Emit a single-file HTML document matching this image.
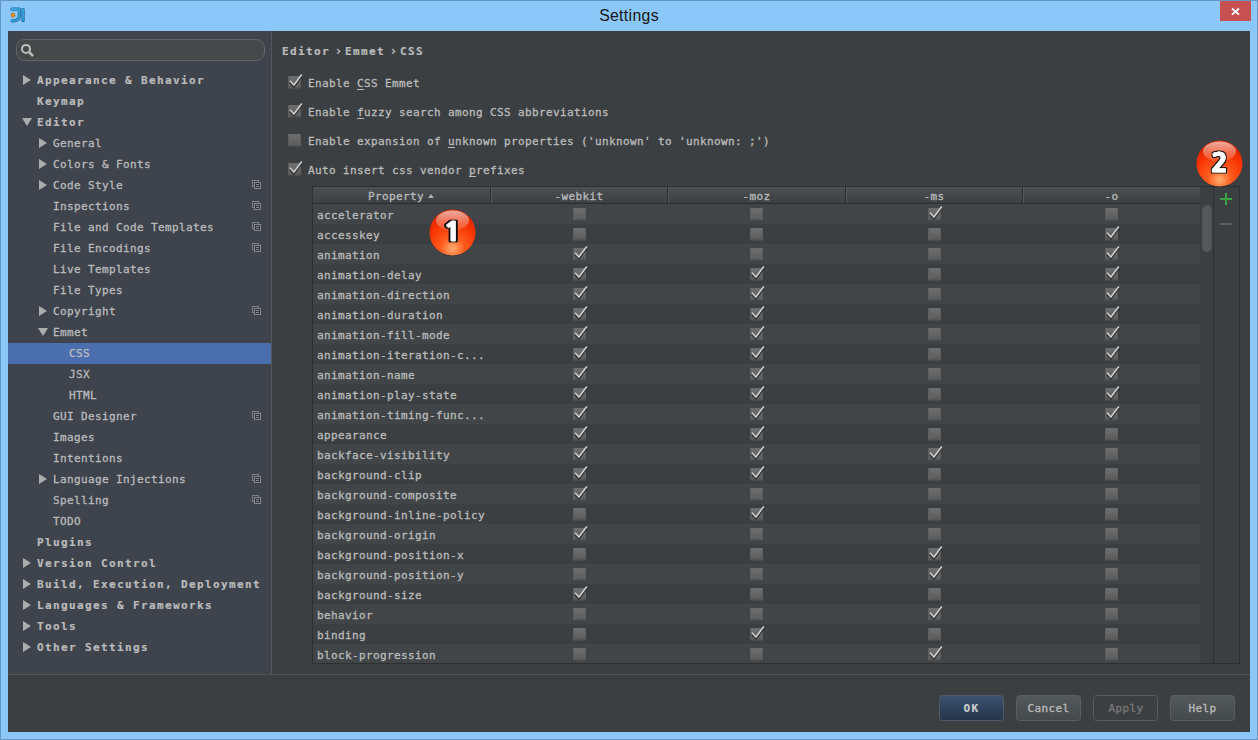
<!DOCTYPE html>
<html lang="en"><head><meta charset="utf-8"><title>Settings</title>
<style>
html,body{margin:0;padding:0}
body{width:1258px;height:740px;position:relative;overflow:hidden;background:#8bc8f9;
 font-family:"DejaVu Sans Mono","Liberation Mono",monospace;font-size:11px;letter-spacing:0.378px;color:#bbbbbb;-webkit-text-stroke:0.3px currentColor;}
body *{box-sizing:border-box}
i{font-style:normal;display:block}
.frame{position:absolute;left:0;top:0;width:1258px;height:740px;border:1px solid #6597c0;}
.title{-webkit-text-stroke:0;position:absolute;left:0;top:6px;width:1258px;text-align:center;font-family:"Liberation Sans",sans-serif;font-size:15.8px;letter-spacing:.33px;color:#1a1512;line-height:20px}
.close{position:absolute;left:1220px;top:1px;width:31px;height:20px;background:#c75050}
.close svg{position:absolute;left:10px;top:5px}
.logo{position:absolute;left:10px;top:7px}
.content{position:absolute;left:8px;top:31px;width:1242px;height:701px;background:#3c3f41}
.side{position:absolute;left:8px;top:31px;width:264px;height:643px;background:#3e434c;border-right:1px solid #555759}
.search{position:absolute;left:8px;top:8px;width:249px;height:22px;border:1px solid #636567;border-radius:9px;background:#45494a}
.search svg{position:absolute;left:4px;top:3px}
.tree{position:absolute;left:0;top:39px;width:263px}
.tr{position:relative;height:21px;line-height:21px;white-space:nowrap}
.tr span{position:absolute;top:0}
.tr.b{font-weight:bold;letter-spacing:1.378px;-webkit-text-stroke:0.2px currentColor}
.tr.sel{background:#4b6eaf}
.ar{position:absolute;top:5px;width:0;height:0;border-left:8.5px solid #adadad;border-top:5px solid transparent;border-bottom:5px solid transparent}
.ad{position:absolute;top:6px;width:0;height:0;border-top:8.5px solid #adadad;border-left:5px solid transparent;border-right:5px solid transparent;margin-left:-0.5px}
.cp{position:absolute;left:244px;top:5px;width:7px;height:7px;border:1px solid #7b7f86}
.cp b{position:absolute;left:1px;top:1px;width:7px;height:7px;border:1px solid #84878d;background:#35383d;display:block}
.cp b:before{content:"";box-sizing:border-box;position:absolute;left:1px;top:1px;width:3px;height:1px;background:#84878d;box-shadow:0 2px 0 #84878d}
.hsep{position:absolute;left:8px;top:674px;width:1242px;height:1px;background:#515355}
.crumb{position:absolute;top:42px;height:20px;line-height:20px;font-weight:bold;letter-spacing:1.378px;-webkit-text-stroke:0.2px currentColor;white-space:nowrap}
.opt{position:absolute;left:308px;height:20px;line-height:20px;white-space:nowrap}
.opt u{text-decoration:underline;text-underline-offset:2px}
.cb{position:absolute;width:13px;height:13px;border-bottom:1px solid #484b4d;}
.cb:before{content:"";box-sizing:border-box;position:absolute;left:0;top:0;width:13px;height:12px;background:linear-gradient(#6e6e6e,#5c5c5c);border:1px solid #5e5e5e;border-top-color:#6a6a6a;border-bottom-color:#565656}
.cb svg{position:absolute;left:-1px;top:-4px}
.tbl{position:absolute;left:312px;top:186px;width:928px;height:478px;border:1px solid #2d2f30;overflow:hidden}
.th{position:absolute;left:0;top:0;width:887px;height:17px;background:linear-gradient(#4c5053,#3c4043);border-bottom:1px solid #2b2d2e}
.hc{position:absolute;top:0;height:16px;line-height:16px;text-align:center}
.hc span{position:relative;top:2px}
.hc.sep{border-left:1px solid #2b2d2e;box-shadow:inset 1px 0 0 #56595b}
.sort{position:absolute;left:115px;top:7px;width:0;height:0;border-bottom:4px solid #adadad;border-left:3.5px solid transparent;border-right:3.5px solid transparent}
.r{position:relative;height:20px;line-height:20px;width:887px;white-space:nowrap}
.tbl .r:nth-child(2){margin-top:17px}
.r.alt{background:#414547}
.r span{position:absolute;left:4px;top:2px}
.r .cb{top:4px}
.sb{position:absolute;left:1200px;top:187px;width:13px;height:476px;background:#3c3f41}
.thumb{position:absolute;left:1202px;top:205px;width:10px;height:47px;border-radius:4px;background:#56595a;border:1px solid #4c4f50}
.tb{position:absolute;left:1213px;top:187px;width:1px;height:476px;background:#2d2f30}
.btn{position:absolute;top:695px;width:65px;height:26px;border-radius:3.5px;border:1px solid #5a5e60;background:linear-gradient(#53585a,#44494b);text-align:center;line-height:26px;color:#bbb}
.btn.ok{background:linear-gradient(#3a5170,#25354a);border-color:#4f5b68;font-weight:bold;letter-spacing:1.378px;-webkit-text-stroke:0.2px currentColor;color:#cacaca}
.btn.dis{background:#3c3f41;color:#787878;border-color:#585b5d;padding-left:1px}
.badge{position:absolute}
</style></head>
<body>
<div class="frame"></div>
<div class="title">Settings</div>
<svg class="logo" width="17" height="17" viewBox="0 0 17 17">
<defs><linearGradient id="lg" gradientUnits="userSpaceOnUse" x1="2" y1="1" x2="14" y2="15"><stop offset="0" stop-color="#45b4ea"/><stop offset="1" stop-color="#2890cc"/></linearGradient></defs>
<path d="M2 2.2 L9.4 2.2 L9.4 9 Q9.4 13.6 2.2 13.8" fill="none" stroke="#1b6498" stroke-width="3.3" stroke-linecap="round" stroke-linejoin="round"/>
<path d="M2 2.2 L9.4 2.2 L9.4 9 Q9.4 13.6 2.2 13.8" fill="none" stroke="url(#lg)" stroke-width="2.1" stroke-linecap="round" stroke-linejoin="round"/>
<path d="M13 2.4 L13 13.6" stroke="#1b6498" stroke-width="3.3" stroke-linecap="round"/>
<path d="M13 2.4 L13 13.6" stroke="url(#lg)" stroke-width="2.1" stroke-linecap="round"/>
<circle cx="3" cy="8" r="1.9" fill="#f59a14" stroke="#b86a0a" stroke-width=".8"/>
</svg>
<div class="close"><svg width="11" height="11" viewBox="0 0 11 11"><path d="M2 2.5 L9 8.7 M9 2.5 L2 8.7" stroke="#fff" stroke-width="1.8"/></svg></div>
<div class="content"></div>
<div class="side">
<div class="search"><svg width="14" height="14" viewBox="0 0 14 14"><circle cx="5" cy="5.9" r="4" fill="none" stroke="#bdbdbd" stroke-width="2"/><path d="M8.2 9.2 L12 13" stroke="#bdbdbd" stroke-width="2.5" stroke-linecap="butt"/></svg></div>
<div class="tree">
<div class="tr b"><i class="ar" style="left:15px"></i><span style="left:29px">Appearance &amp; Behavior</span></div>
<div class="tr b"><span style="left:29px">Keymap</span></div>
<div class="tr b"><i class="ad" style="left:14px"></i><span style="left:29px">Editor</span></div>
<div class="tr"><i class="ar" style="left:31px"></i><span style="left:45px">General</span></div>
<div class="tr"><i class="ar" style="left:31px"></i><span style="left:45px">Colors &amp; Fonts</span></div>
<div class="tr"><i class="ar" style="left:31px"></i><span style="left:45px">Code Style</span><i class="cp"><b></b></i></div>
<div class="tr"><span style="left:45px">Inspections</span><i class="cp"><b></b></i></div>
<div class="tr"><span style="left:45px">File and Code Templates</span><i class="cp"><b></b></i></div>
<div class="tr"><span style="left:45px">File Encodings</span><i class="cp"><b></b></i></div>
<div class="tr"><span style="left:45px">Live Templates</span></div>
<div class="tr"><span style="left:45px">File Types</span></div>
<div class="tr"><i class="ar" style="left:31px"></i><span style="left:45px">Copyright</span><i class="cp"><b></b></i></div>
<div class="tr"><i class="ad" style="left:30px"></i><span style="left:45px">Emmet</span></div>
<div class="tr sel"><span style="left:61px">CSS</span></div>
<div class="tr"><span style="left:61px">JSX</span></div>
<div class="tr"><span style="left:61px">HTML</span></div>
<div class="tr"><span style="left:45px">GUI Designer</span><i class="cp"><b></b></i></div>
<div class="tr"><span style="left:45px">Images</span></div>
<div class="tr"><span style="left:45px">Intentions</span></div>
<div class="tr"><i class="ar" style="left:31px"></i><span style="left:45px">Language Injections</span><i class="cp"><b></b></i></div>
<div class="tr"><span style="left:45px">Spelling</span><i class="cp"><b></b></i></div>
<div class="tr"><span style="left:45px">TODO</span></div>
<div class="tr b"><span style="left:29px">Plugins</span></div>
<div class="tr b"><i class="ar" style="left:15px"></i><span style="left:29px">Version Control</span></div>
<div class="tr b"><i class="ar" style="left:15px"></i><span style="left:29px">Build, Execution, Deployment</span></div>
<div class="tr b"><i class="ar" style="left:15px"></i><span style="left:29px">Languages &amp; Frameworks</span></div>
<div class="tr b"><i class="ar" style="left:15px"></i><span style="left:29px">Tools</span></div>
<div class="tr b"><i class="ar" style="left:15px"></i><span style="left:29px">Other Settings</span></div>
</div>
</div>
<div class="hsep"></div>
<div class="crumb" style="left:282px">Editor</div>
<div class="crumb" style="left:334.5px;font-size:13px;top:41px">›</div>
<div class="crumb" style="left:345px">Emmet</div>
<div class="crumb" style="left:389.5px;font-size:13px;top:41px">›</div>
<div class="crumb" style="left:400px">CSS</div>
<i class="cb on" style="left:288px;top:76px"><svg width="17" height="16" viewBox="0 0 17 16"><path d="M3 8.8 L6.9 13 L14.8 2.4" fill="none" stroke="#262626" stroke-opacity=".8" stroke-width="2.4" transform="translate(0,1.3)"/><path d="M3 8.8 L6.9 13 L14.8 2.4" fill="none" stroke="#cfcfcf" stroke-width="1.6"/></svg></i>
<div class="opt" style="top:74px">Enable <u>C</u>SS Emmet</div>
<i class="cb on" style="left:288px;top:105px"><svg width="17" height="16" viewBox="0 0 17 16"><path d="M3 8.8 L6.9 13 L14.8 2.4" fill="none" stroke="#262626" stroke-opacity=".8" stroke-width="2.4" transform="translate(0,1.3)"/><path d="M3 8.8 L6.9 13 L14.8 2.4" fill="none" stroke="#cfcfcf" stroke-width="1.6"/></svg></i>
<div class="opt" style="top:103px">Enable <u>f</u>uzzy search among CSS abbreviations</div>
<i class="cb" style="left:288px;top:134px"></i>
<div class="opt" style="top:132px">Enable expansion of <u>u</u>nknown properties ('unknown' to 'unknown: ;')</div>
<i class="cb on" style="left:288px;top:163px"><svg width="17" height="16" viewBox="0 0 17 16"><path d="M3 8.8 L6.9 13 L14.8 2.4" fill="none" stroke="#262626" stroke-opacity=".8" stroke-width="2.4" transform="translate(0,1.3)"/><path d="M3 8.8 L6.9 13 L14.8 2.4" fill="none" stroke="#cfcfcf" stroke-width="1.6"/></svg></i>
<div class="opt" style="top:161px">Auto insert css vendor <u>p</u>refixes</div>
<div class="tbl">
<div class="th"><div class="hc" style="left:0;width:177px;text-align:left"><span style="left:55px">Property</span><i class="sort"></i></div><div class="hc sep" style="left:177px;width:177px"><span>-webkit</span></div><div class="hc sep" style="left:354px;width:178px"><span>-moz</span></div><div class="hc sep" style="left:532px;width:177px"><span>-ms</span></div><div class="hc sep" style="left:709px;width:178px"><span>-o</span></div></div>
<div class="r alt"><span>accelerator</span><i class="cb" style="left:260px"></i><i class="cb" style="left:437px"></i><i class="cb on" style="left:615px"><svg width="17" height="16" viewBox="0 0 17 16"><path d="M3 8.8 L6.9 13 L14.8 2.4" fill="none" stroke="#262626" stroke-opacity=".8" stroke-width="2.4" transform="translate(0,1.3)"/><path d="M3 8.8 L6.9 13 L14.8 2.4" fill="none" stroke="#cfcfcf" stroke-width="1.6"/></svg></i><i class="cb" style="left:792px"></i></div>
<div class="r"><span>accesskey</span><i class="cb" style="left:260px"></i><i class="cb" style="left:437px"></i><i class="cb" style="left:615px"></i><i class="cb on" style="left:792px"><svg width="17" height="16" viewBox="0 0 17 16"><path d="M3 8.8 L6.9 13 L14.8 2.4" fill="none" stroke="#262626" stroke-opacity=".8" stroke-width="2.4" transform="translate(0,1.3)"/><path d="M3 8.8 L6.9 13 L14.8 2.4" fill="none" stroke="#cfcfcf" stroke-width="1.6"/></svg></i></div>
<div class="r alt"><span>animation</span><i class="cb on" style="left:260px"><svg width="17" height="16" viewBox="0 0 17 16"><path d="M3 8.8 L6.9 13 L14.8 2.4" fill="none" stroke="#262626" stroke-opacity=".8" stroke-width="2.4" transform="translate(0,1.3)"/><path d="M3 8.8 L6.9 13 L14.8 2.4" fill="none" stroke="#cfcfcf" stroke-width="1.6"/></svg></i><i class="cb" style="left:437px"></i><i class="cb" style="left:615px"></i><i class="cb on" style="left:792px"><svg width="17" height="16" viewBox="0 0 17 16"><path d="M3 8.8 L6.9 13 L14.8 2.4" fill="none" stroke="#262626" stroke-opacity=".8" stroke-width="2.4" transform="translate(0,1.3)"/><path d="M3 8.8 L6.9 13 L14.8 2.4" fill="none" stroke="#cfcfcf" stroke-width="1.6"/></svg></i></div>
<div class="r"><span>animation-delay</span><i class="cb on" style="left:260px"><svg width="17" height="16" viewBox="0 0 17 16"><path d="M3 8.8 L6.9 13 L14.8 2.4" fill="none" stroke="#262626" stroke-opacity=".8" stroke-width="2.4" transform="translate(0,1.3)"/><path d="M3 8.8 L6.9 13 L14.8 2.4" fill="none" stroke="#cfcfcf" stroke-width="1.6"/></svg></i><i class="cb on" style="left:437px"><svg width="17" height="16" viewBox="0 0 17 16"><path d="M3 8.8 L6.9 13 L14.8 2.4" fill="none" stroke="#262626" stroke-opacity=".8" stroke-width="2.4" transform="translate(0,1.3)"/><path d="M3 8.8 L6.9 13 L14.8 2.4" fill="none" stroke="#cfcfcf" stroke-width="1.6"/></svg></i><i class="cb" style="left:615px"></i><i class="cb on" style="left:792px"><svg width="17" height="16" viewBox="0 0 17 16"><path d="M3 8.8 L6.9 13 L14.8 2.4" fill="none" stroke="#262626" stroke-opacity=".8" stroke-width="2.4" transform="translate(0,1.3)"/><path d="M3 8.8 L6.9 13 L14.8 2.4" fill="none" stroke="#cfcfcf" stroke-width="1.6"/></svg></i></div>
<div class="r alt"><span>animation-direction</span><i class="cb on" style="left:260px"><svg width="17" height="16" viewBox="0 0 17 16"><path d="M3 8.8 L6.9 13 L14.8 2.4" fill="none" stroke="#262626" stroke-opacity=".8" stroke-width="2.4" transform="translate(0,1.3)"/><path d="M3 8.8 L6.9 13 L14.8 2.4" fill="none" stroke="#cfcfcf" stroke-width="1.6"/></svg></i><i class="cb on" style="left:437px"><svg width="17" height="16" viewBox="0 0 17 16"><path d="M3 8.8 L6.9 13 L14.8 2.4" fill="none" stroke="#262626" stroke-opacity=".8" stroke-width="2.4" transform="translate(0,1.3)"/><path d="M3 8.8 L6.9 13 L14.8 2.4" fill="none" stroke="#cfcfcf" stroke-width="1.6"/></svg></i><i class="cb" style="left:615px"></i><i class="cb on" style="left:792px"><svg width="17" height="16" viewBox="0 0 17 16"><path d="M3 8.8 L6.9 13 L14.8 2.4" fill="none" stroke="#262626" stroke-opacity=".8" stroke-width="2.4" transform="translate(0,1.3)"/><path d="M3 8.8 L6.9 13 L14.8 2.4" fill="none" stroke="#cfcfcf" stroke-width="1.6"/></svg></i></div>
<div class="r"><span>animation-duration</span><i class="cb on" style="left:260px"><svg width="17" height="16" viewBox="0 0 17 16"><path d="M3 8.8 L6.9 13 L14.8 2.4" fill="none" stroke="#262626" stroke-opacity=".8" stroke-width="2.4" transform="translate(0,1.3)"/><path d="M3 8.8 L6.9 13 L14.8 2.4" fill="none" stroke="#cfcfcf" stroke-width="1.6"/></svg></i><i class="cb on" style="left:437px"><svg width="17" height="16" viewBox="0 0 17 16"><path d="M3 8.8 L6.9 13 L14.8 2.4" fill="none" stroke="#262626" stroke-opacity=".8" stroke-width="2.4" transform="translate(0,1.3)"/><path d="M3 8.8 L6.9 13 L14.8 2.4" fill="none" stroke="#cfcfcf" stroke-width="1.6"/></svg></i><i class="cb" style="left:615px"></i><i class="cb on" style="left:792px"><svg width="17" height="16" viewBox="0 0 17 16"><path d="M3 8.8 L6.9 13 L14.8 2.4" fill="none" stroke="#262626" stroke-opacity=".8" stroke-width="2.4" transform="translate(0,1.3)"/><path d="M3 8.8 L6.9 13 L14.8 2.4" fill="none" stroke="#cfcfcf" stroke-width="1.6"/></svg></i></div>
<div class="r alt"><span>animation-fill-mode</span><i class="cb on" style="left:260px"><svg width="17" height="16" viewBox="0 0 17 16"><path d="M3 8.8 L6.9 13 L14.8 2.4" fill="none" stroke="#262626" stroke-opacity=".8" stroke-width="2.4" transform="translate(0,1.3)"/><path d="M3 8.8 L6.9 13 L14.8 2.4" fill="none" stroke="#cfcfcf" stroke-width="1.6"/></svg></i><i class="cb on" style="left:437px"><svg width="17" height="16" viewBox="0 0 17 16"><path d="M3 8.8 L6.9 13 L14.8 2.4" fill="none" stroke="#262626" stroke-opacity=".8" stroke-width="2.4" transform="translate(0,1.3)"/><path d="M3 8.8 L6.9 13 L14.8 2.4" fill="none" stroke="#cfcfcf" stroke-width="1.6"/></svg></i><i class="cb" style="left:615px"></i><i class="cb on" style="left:792px"><svg width="17" height="16" viewBox="0 0 17 16"><path d="M3 8.8 L6.9 13 L14.8 2.4" fill="none" stroke="#262626" stroke-opacity=".8" stroke-width="2.4" transform="translate(0,1.3)"/><path d="M3 8.8 L6.9 13 L14.8 2.4" fill="none" stroke="#cfcfcf" stroke-width="1.6"/></svg></i></div>
<div class="r"><span>animation-iteration-c...</span><i class="cb on" style="left:260px"><svg width="17" height="16" viewBox="0 0 17 16"><path d="M3 8.8 L6.9 13 L14.8 2.4" fill="none" stroke="#262626" stroke-opacity=".8" stroke-width="2.4" transform="translate(0,1.3)"/><path d="M3 8.8 L6.9 13 L14.8 2.4" fill="none" stroke="#cfcfcf" stroke-width="1.6"/></svg></i><i class="cb on" style="left:437px"><svg width="17" height="16" viewBox="0 0 17 16"><path d="M3 8.8 L6.9 13 L14.8 2.4" fill="none" stroke="#262626" stroke-opacity=".8" stroke-width="2.4" transform="translate(0,1.3)"/><path d="M3 8.8 L6.9 13 L14.8 2.4" fill="none" stroke="#cfcfcf" stroke-width="1.6"/></svg></i><i class="cb" style="left:615px"></i><i class="cb on" style="left:792px"><svg width="17" height="16" viewBox="0 0 17 16"><path d="M3 8.8 L6.9 13 L14.8 2.4" fill="none" stroke="#262626" stroke-opacity=".8" stroke-width="2.4" transform="translate(0,1.3)"/><path d="M3 8.8 L6.9 13 L14.8 2.4" fill="none" stroke="#cfcfcf" stroke-width="1.6"/></svg></i></div>
<div class="r alt"><span>animation-name</span><i class="cb on" style="left:260px"><svg width="17" height="16" viewBox="0 0 17 16"><path d="M3 8.8 L6.9 13 L14.8 2.4" fill="none" stroke="#262626" stroke-opacity=".8" stroke-width="2.4" transform="translate(0,1.3)"/><path d="M3 8.8 L6.9 13 L14.8 2.4" fill="none" stroke="#cfcfcf" stroke-width="1.6"/></svg></i><i class="cb on" style="left:437px"><svg width="17" height="16" viewBox="0 0 17 16"><path d="M3 8.8 L6.9 13 L14.8 2.4" fill="none" stroke="#262626" stroke-opacity=".8" stroke-width="2.4" transform="translate(0,1.3)"/><path d="M3 8.8 L6.9 13 L14.8 2.4" fill="none" stroke="#cfcfcf" stroke-width="1.6"/></svg></i><i class="cb" style="left:615px"></i><i class="cb on" style="left:792px"><svg width="17" height="16" viewBox="0 0 17 16"><path d="M3 8.8 L6.9 13 L14.8 2.4" fill="none" stroke="#262626" stroke-opacity=".8" stroke-width="2.4" transform="translate(0,1.3)"/><path d="M3 8.8 L6.9 13 L14.8 2.4" fill="none" stroke="#cfcfcf" stroke-width="1.6"/></svg></i></div>
<div class="r"><span>animation-play-state</span><i class="cb on" style="left:260px"><svg width="17" height="16" viewBox="0 0 17 16"><path d="M3 8.8 L6.9 13 L14.8 2.4" fill="none" stroke="#262626" stroke-opacity=".8" stroke-width="2.4" transform="translate(0,1.3)"/><path d="M3 8.8 L6.9 13 L14.8 2.4" fill="none" stroke="#cfcfcf" stroke-width="1.6"/></svg></i><i class="cb on" style="left:437px"><svg width="17" height="16" viewBox="0 0 17 16"><path d="M3 8.8 L6.9 13 L14.8 2.4" fill="none" stroke="#262626" stroke-opacity=".8" stroke-width="2.4" transform="translate(0,1.3)"/><path d="M3 8.8 L6.9 13 L14.8 2.4" fill="none" stroke="#cfcfcf" stroke-width="1.6"/></svg></i><i class="cb" style="left:615px"></i><i class="cb on" style="left:792px"><svg width="17" height="16" viewBox="0 0 17 16"><path d="M3 8.8 L6.9 13 L14.8 2.4" fill="none" stroke="#262626" stroke-opacity=".8" stroke-width="2.4" transform="translate(0,1.3)"/><path d="M3 8.8 L6.9 13 L14.8 2.4" fill="none" stroke="#cfcfcf" stroke-width="1.6"/></svg></i></div>
<div class="r alt"><span>animation-timing-func...</span><i class="cb on" style="left:260px"><svg width="17" height="16" viewBox="0 0 17 16"><path d="M3 8.8 L6.9 13 L14.8 2.4" fill="none" stroke="#262626" stroke-opacity=".8" stroke-width="2.4" transform="translate(0,1.3)"/><path d="M3 8.8 L6.9 13 L14.8 2.4" fill="none" stroke="#cfcfcf" stroke-width="1.6"/></svg></i><i class="cb on" style="left:437px"><svg width="17" height="16" viewBox="0 0 17 16"><path d="M3 8.8 L6.9 13 L14.8 2.4" fill="none" stroke="#262626" stroke-opacity=".8" stroke-width="2.4" transform="translate(0,1.3)"/><path d="M3 8.8 L6.9 13 L14.8 2.4" fill="none" stroke="#cfcfcf" stroke-width="1.6"/></svg></i><i class="cb" style="left:615px"></i><i class="cb on" style="left:792px"><svg width="17" height="16" viewBox="0 0 17 16"><path d="M3 8.8 L6.9 13 L14.8 2.4" fill="none" stroke="#262626" stroke-opacity=".8" stroke-width="2.4" transform="translate(0,1.3)"/><path d="M3 8.8 L6.9 13 L14.8 2.4" fill="none" stroke="#cfcfcf" stroke-width="1.6"/></svg></i></div>
<div class="r"><span>appearance</span><i class="cb on" style="left:260px"><svg width="17" height="16" viewBox="0 0 17 16"><path d="M3 8.8 L6.9 13 L14.8 2.4" fill="none" stroke="#262626" stroke-opacity=".8" stroke-width="2.4" transform="translate(0,1.3)"/><path d="M3 8.8 L6.9 13 L14.8 2.4" fill="none" stroke="#cfcfcf" stroke-width="1.6"/></svg></i><i class="cb on" style="left:437px"><svg width="17" height="16" viewBox="0 0 17 16"><path d="M3 8.8 L6.9 13 L14.8 2.4" fill="none" stroke="#262626" stroke-opacity=".8" stroke-width="2.4" transform="translate(0,1.3)"/><path d="M3 8.8 L6.9 13 L14.8 2.4" fill="none" stroke="#cfcfcf" stroke-width="1.6"/></svg></i><i class="cb" style="left:615px"></i><i class="cb" style="left:792px"></i></div>
<div class="r alt"><span>backface-visibility</span><i class="cb on" style="left:260px"><svg width="17" height="16" viewBox="0 0 17 16"><path d="M3 8.8 L6.9 13 L14.8 2.4" fill="none" stroke="#262626" stroke-opacity=".8" stroke-width="2.4" transform="translate(0,1.3)"/><path d="M3 8.8 L6.9 13 L14.8 2.4" fill="none" stroke="#cfcfcf" stroke-width="1.6"/></svg></i><i class="cb on" style="left:437px"><svg width="17" height="16" viewBox="0 0 17 16"><path d="M3 8.8 L6.9 13 L14.8 2.4" fill="none" stroke="#262626" stroke-opacity=".8" stroke-width="2.4" transform="translate(0,1.3)"/><path d="M3 8.8 L6.9 13 L14.8 2.4" fill="none" stroke="#cfcfcf" stroke-width="1.6"/></svg></i><i class="cb on" style="left:615px"><svg width="17" height="16" viewBox="0 0 17 16"><path d="M3 8.8 L6.9 13 L14.8 2.4" fill="none" stroke="#262626" stroke-opacity=".8" stroke-width="2.4" transform="translate(0,1.3)"/><path d="M3 8.8 L6.9 13 L14.8 2.4" fill="none" stroke="#cfcfcf" stroke-width="1.6"/></svg></i><i class="cb" style="left:792px"></i></div>
<div class="r"><span>background-clip</span><i class="cb on" style="left:260px"><svg width="17" height="16" viewBox="0 0 17 16"><path d="M3 8.8 L6.9 13 L14.8 2.4" fill="none" stroke="#262626" stroke-opacity=".8" stroke-width="2.4" transform="translate(0,1.3)"/><path d="M3 8.8 L6.9 13 L14.8 2.4" fill="none" stroke="#cfcfcf" stroke-width="1.6"/></svg></i><i class="cb on" style="left:437px"><svg width="17" height="16" viewBox="0 0 17 16"><path d="M3 8.8 L6.9 13 L14.8 2.4" fill="none" stroke="#262626" stroke-opacity=".8" stroke-width="2.4" transform="translate(0,1.3)"/><path d="M3 8.8 L6.9 13 L14.8 2.4" fill="none" stroke="#cfcfcf" stroke-width="1.6"/></svg></i><i class="cb" style="left:615px"></i><i class="cb" style="left:792px"></i></div>
<div class="r alt"><span>background-composite</span><i class="cb on" style="left:260px"><svg width="17" height="16" viewBox="0 0 17 16"><path d="M3 8.8 L6.9 13 L14.8 2.4" fill="none" stroke="#262626" stroke-opacity=".8" stroke-width="2.4" transform="translate(0,1.3)"/><path d="M3 8.8 L6.9 13 L14.8 2.4" fill="none" stroke="#cfcfcf" stroke-width="1.6"/></svg></i><i class="cb" style="left:437px"></i><i class="cb" style="left:615px"></i><i class="cb" style="left:792px"></i></div>
<div class="r"><span>background-inline-policy</span><i class="cb" style="left:260px"></i><i class="cb on" style="left:437px"><svg width="17" height="16" viewBox="0 0 17 16"><path d="M3 8.8 L6.9 13 L14.8 2.4" fill="none" stroke="#262626" stroke-opacity=".8" stroke-width="2.4" transform="translate(0,1.3)"/><path d="M3 8.8 L6.9 13 L14.8 2.4" fill="none" stroke="#cfcfcf" stroke-width="1.6"/></svg></i><i class="cb" style="left:615px"></i><i class="cb" style="left:792px"></i></div>
<div class="r alt"><span>background-origin</span><i class="cb on" style="left:260px"><svg width="17" height="16" viewBox="0 0 17 16"><path d="M3 8.8 L6.9 13 L14.8 2.4" fill="none" stroke="#262626" stroke-opacity=".8" stroke-width="2.4" transform="translate(0,1.3)"/><path d="M3 8.8 L6.9 13 L14.8 2.4" fill="none" stroke="#cfcfcf" stroke-width="1.6"/></svg></i><i class="cb" style="left:437px"></i><i class="cb" style="left:615px"></i><i class="cb" style="left:792px"></i></div>
<div class="r"><span>background-position-x</span><i class="cb" style="left:260px"></i><i class="cb" style="left:437px"></i><i class="cb on" style="left:615px"><svg width="17" height="16" viewBox="0 0 17 16"><path d="M3 8.8 L6.9 13 L14.8 2.4" fill="none" stroke="#262626" stroke-opacity=".8" stroke-width="2.4" transform="translate(0,1.3)"/><path d="M3 8.8 L6.9 13 L14.8 2.4" fill="none" stroke="#cfcfcf" stroke-width="1.6"/></svg></i><i class="cb" style="left:792px"></i></div>
<div class="r alt"><span>background-position-y</span><i class="cb" style="left:260px"></i><i class="cb" style="left:437px"></i><i class="cb on" style="left:615px"><svg width="17" height="16" viewBox="0 0 17 16"><path d="M3 8.8 L6.9 13 L14.8 2.4" fill="none" stroke="#262626" stroke-opacity=".8" stroke-width="2.4" transform="translate(0,1.3)"/><path d="M3 8.8 L6.9 13 L14.8 2.4" fill="none" stroke="#cfcfcf" stroke-width="1.6"/></svg></i><i class="cb" style="left:792px"></i></div>
<div class="r"><span>background-size</span><i class="cb on" style="left:260px"><svg width="17" height="16" viewBox="0 0 17 16"><path d="M3 8.8 L6.9 13 L14.8 2.4" fill="none" stroke="#262626" stroke-opacity=".8" stroke-width="2.4" transform="translate(0,1.3)"/><path d="M3 8.8 L6.9 13 L14.8 2.4" fill="none" stroke="#cfcfcf" stroke-width="1.6"/></svg></i><i class="cb" style="left:437px"></i><i class="cb" style="left:615px"></i><i class="cb" style="left:792px"></i></div>
<div class="r alt"><span>behavior</span><i class="cb" style="left:260px"></i><i class="cb" style="left:437px"></i><i class="cb on" style="left:615px"><svg width="17" height="16" viewBox="0 0 17 16"><path d="M3 8.8 L6.9 13 L14.8 2.4" fill="none" stroke="#262626" stroke-opacity=".8" stroke-width="2.4" transform="translate(0,1.3)"/><path d="M3 8.8 L6.9 13 L14.8 2.4" fill="none" stroke="#cfcfcf" stroke-width="1.6"/></svg></i><i class="cb" style="left:792px"></i></div>
<div class="r"><span>binding</span><i class="cb" style="left:260px"></i><i class="cb on" style="left:437px"><svg width="17" height="16" viewBox="0 0 17 16"><path d="M3 8.8 L6.9 13 L14.8 2.4" fill="none" stroke="#262626" stroke-opacity=".8" stroke-width="2.4" transform="translate(0,1.3)"/><path d="M3 8.8 L6.9 13 L14.8 2.4" fill="none" stroke="#cfcfcf" stroke-width="1.6"/></svg></i><i class="cb" style="left:615px"></i><i class="cb" style="left:792px"></i></div>
<div class="r alt"><span>block-progression</span><i class="cb" style="left:260px"></i><i class="cb" style="left:437px"></i><i class="cb on" style="left:615px"><svg width="17" height="16" viewBox="0 0 17 16"><path d="M3 8.8 L6.9 13 L14.8 2.4" fill="none" stroke="#262626" stroke-opacity=".8" stroke-width="2.4" transform="translate(0,1.3)"/><path d="M3 8.8 L6.9 13 L14.8 2.4" fill="none" stroke="#cfcfcf" stroke-width="1.6"/></svg></i><i class="cb" style="left:792px"></i></div>
</div>
<div class="sb"></div><div class="thumb"></div><div class="tb"></div>
<svg style="position:absolute;left:1219px;top:192px" width="14" height="14" viewBox="0 0 14 14"><path d="M7 1 V13 M1 7 H13" stroke="#39a545" stroke-width="2"/></svg>
<div style="position:absolute;left:1220px;top:223px;width:12px;height:2px;background:#5c5f60"></div>
<svg width="0" height="0" style="position:absolute"><defs>
<radialGradient id="bg1" cx="50%" cy="85%" r="75%"><stop offset="0" stop-color="#ffae6e"/><stop offset=".35" stop-color="#ff5a1e"/><stop offset=".8" stop-color="#f53000"/><stop offset="1" stop-color="#dc2800"/></radialGradient>
<linearGradient id="gl" x1="0" y1="0" x2="0" y2="1"><stop offset="0" stop-color="#fff" stop-opacity=".62"/><stop offset="1" stop-color="#fff" stop-opacity=".1"/></linearGradient>
<filter id="ol" x="-30%" y="-30%" width="160%" height="160%"><feMorphology in="SourceAlpha" operator="dilate" radius="1.25" result="d"/><feGaussianBlur in="d" stdDeviation=".35" result="db"/><feFlood flood-color="#0d0d0d"/><feComposite in2="db" operator="in" result="o"/><feMerge><feMergeNode in="o"/><feMergeNode in="SourceGraphic"/></feMerge></filter>
</defs></svg>
<svg class="badge" style="left:428px;top:208px" width="49" height="50" viewBox="0 0 49 50">
<ellipse cx="24.5" cy="27" rx="22" ry="21.5" fill="#000" opacity=".18"/>
<circle cx="24.5" cy="24.5" r="23" fill="url(#bg1)"/>
<ellipse cx="24.5" cy="12.5" rx="16.5" ry="10" fill="url(#gl)"/>
<g transform="translate(24.5,0) scale(1.2,1)" text-anchor="middle" font-family="NanumGothic, Liberation Sans, sans-serif" font-weight="800" font-size="26.2" letter-spacing="0" stroke-linejoin="round"><text x="0" y="32.7" fill="#fff" stroke="#fff" stroke-width=".5" filter="url(#ol)">1</text></g>
</svg>
<svg class="badge" style="left:1195px;top:139px" width="49" height="50" viewBox="0 0 49 50">
<ellipse cx="24.5" cy="27" rx="22" ry="21.5" fill="#000" opacity=".18"/>
<circle cx="24.5" cy="24.5" r="23" fill="url(#bg1)"/>
<ellipse cx="24.5" cy="12.5" rx="16.5" ry="10" fill="url(#gl)"/>
<g transform="translate(24.5,0) scale(1.06,1)" text-anchor="middle" font-family="NanumGothic, Liberation Sans, sans-serif" font-weight="800" font-size="26.2" letter-spacing="0" stroke-linejoin="round"><text x="0" y="32.7" fill="#fff" stroke="#fff" stroke-width=".9" filter="url(#ol)">2</text></g>
</svg>
<div class="btn ok" style="left:939px">OK</div>
<div class="btn" style="left:1016px">Cancel</div>
<div class="btn dis" style="left:1093px">Apply</div>
<div class="btn" style="left:1170px">Help</div>
</body></html>
